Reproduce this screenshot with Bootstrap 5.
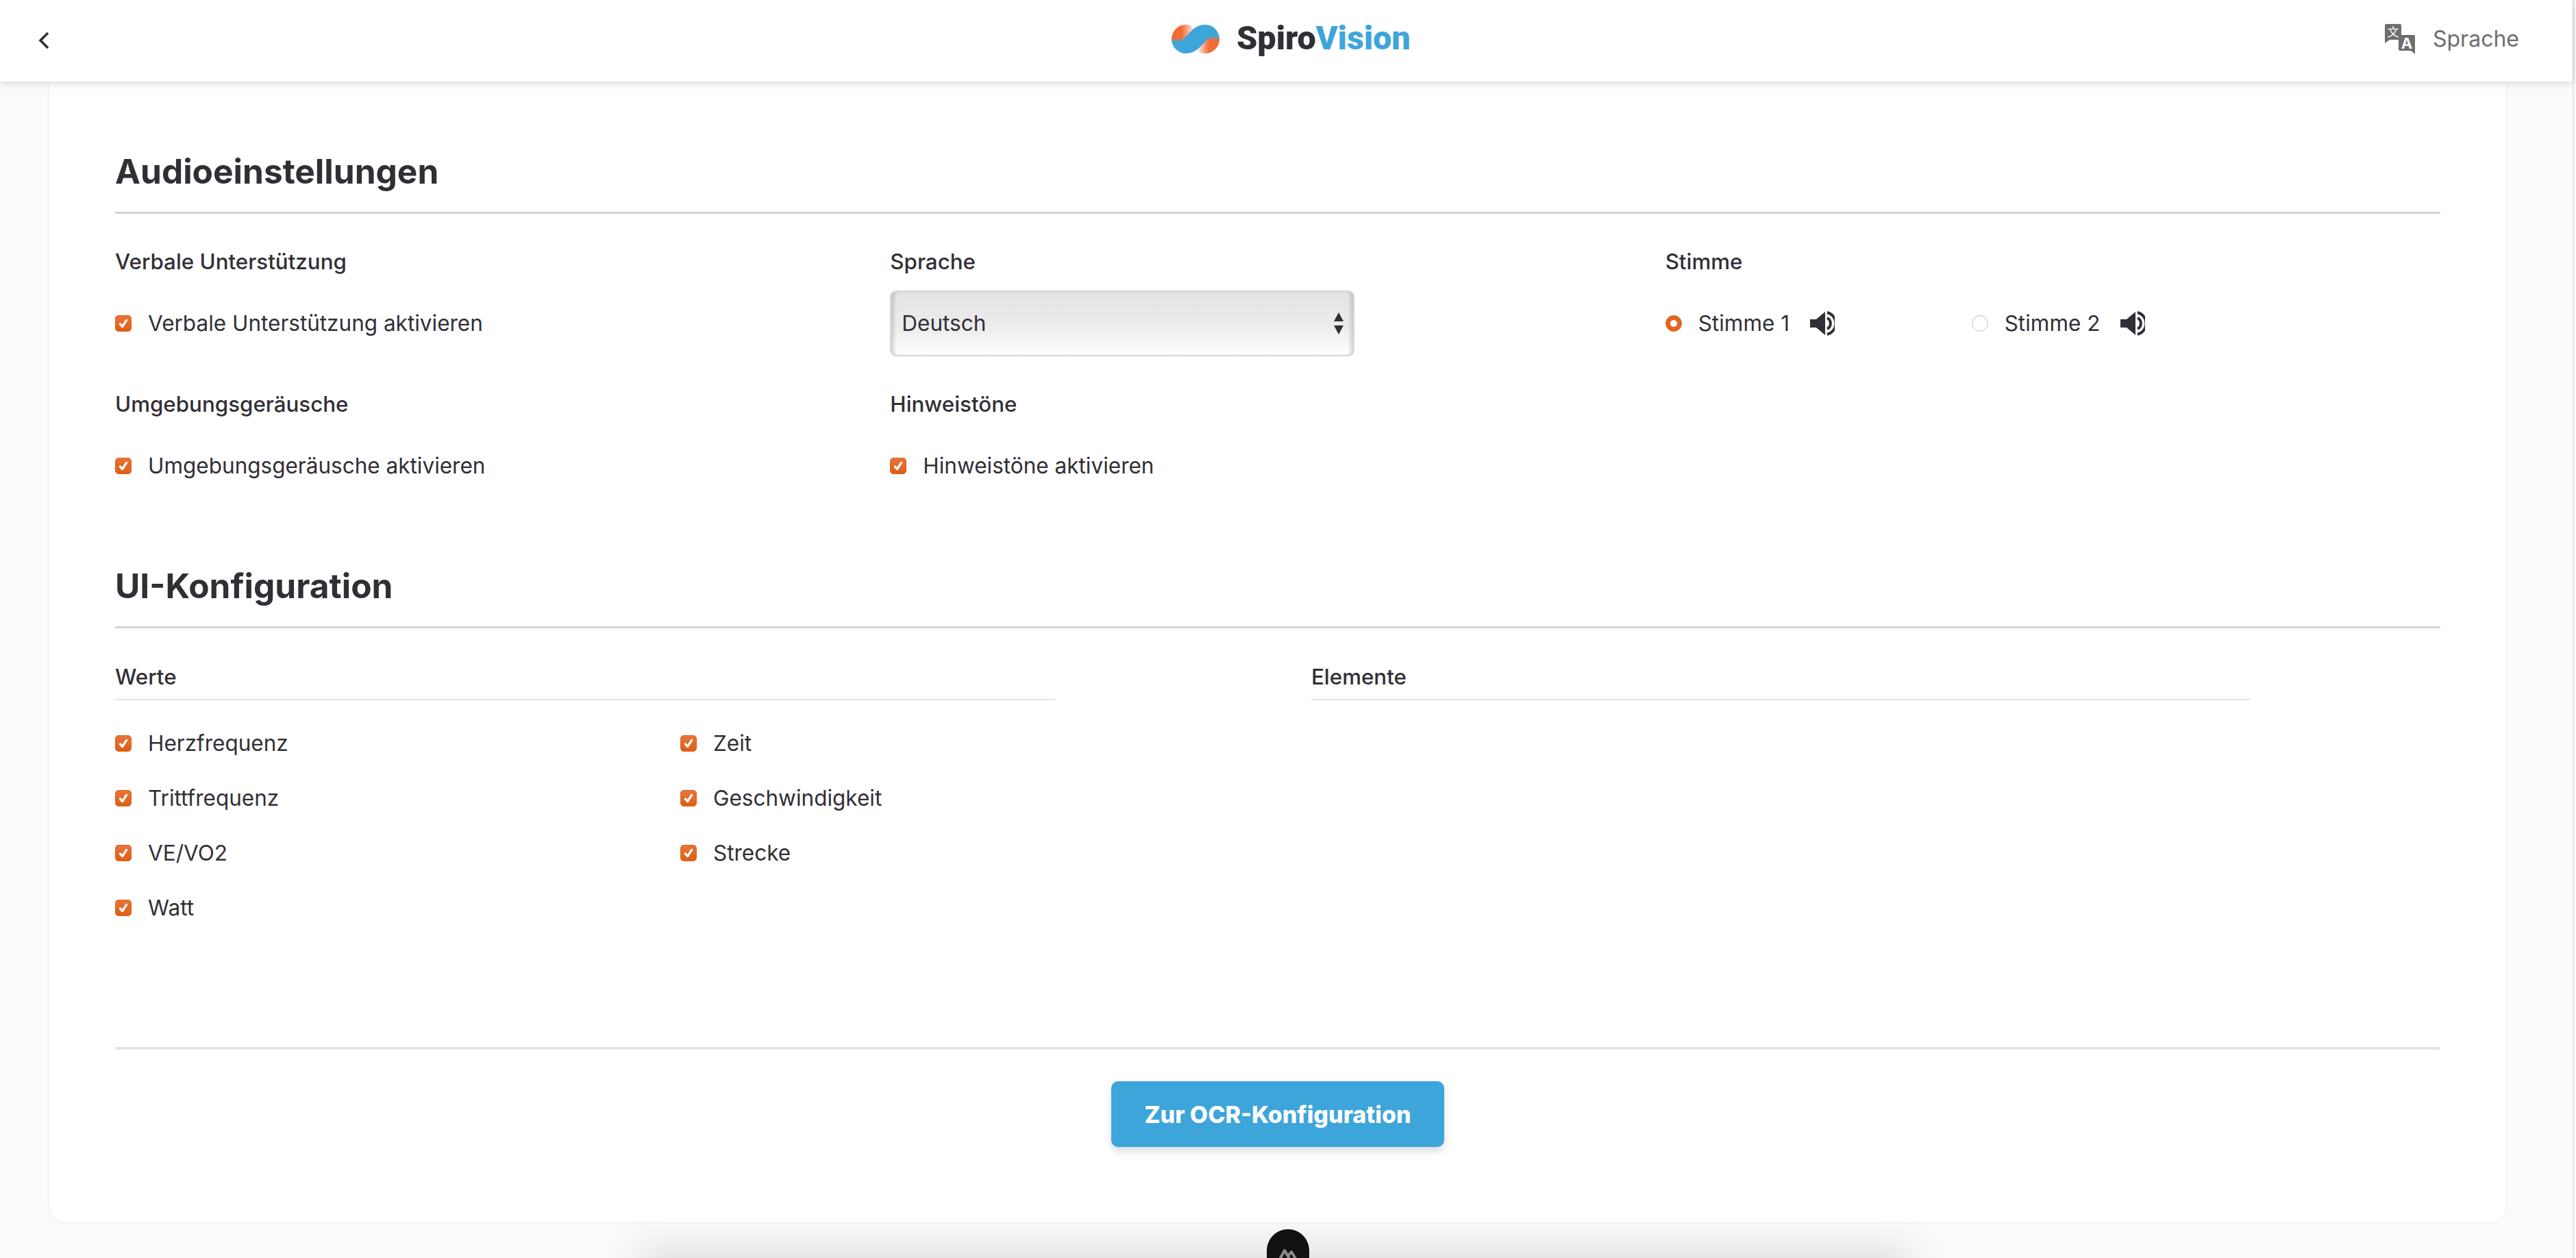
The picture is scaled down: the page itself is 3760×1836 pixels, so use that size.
<!DOCTYPE html>
<html lang="de">
<head>
    <meta charset="utf-8">
    <title>SpiroVision</title>
    <link href="https://cdn.jsdelivr.net/npm/bootstrap@5.3.0/dist/css/bootstrap.min.css" rel="stylesheet">
    <style>
        html, body { height: 100%; }
        body { background: #fbfbfb; color: #312f36; font-family: "Inter", "Liberation Sans", sans-serif; font-size: 31.5px; overflow: hidden; }
        .app-shell { height: 1836px; margin-right: 3px; border-right: 2px solid #e4e4e4; }
        .top-bar { height: 119px; background: #fff; box-shadow: 0 2px 12px rgba(0,0,0,.16); position: relative; z-index: 5; padding: 0 78px 6px 55px; }
        .top-bar .side-l { width: 336px; }
        .top-bar .side-r { width: 300px; }
        .brand { font-family: "Roboto", "Liberation Sans", sans-serif; font-weight: 900; font-size: 48.5px; line-height: 1; color: #312f36; gap: 24px; }
        .brand span { color: #3ea5db; }
        .lang-link { color: #6e6e6e; font-size: 32px; gap: 26px; }
        .lang-icon { overflow: visible; }
        .panel { width: 3586px; margin-left: 72px; background: #fff; border-radius: 0 0 24px 24px; box-shadow: 0 0 4px rgba(0,0,0,.08); height: 1665px; padding: 101px 96px 0; }
        .section-title { font-size: 49.6px; font-weight: 700; line-height: 60px; margin: 0; padding-bottom: 29px; border-bottom: 3px solid #d5d5d5; }
        .field-label { font-size: 31.3px; font-weight: 500; line-height: 48px; margin: 0 0 18px; }
        .ctl-row { height: 96px; }
        .settings-row { margin-top: 46px; }
        .form-check { min-height: 0; padding: 0; margin: 0; display: flex; align-items: center; gap: 24px; }
        .form-check .form-check-input { float: none; margin: 0; width: 24px; height: 24px; flex: none; border: 1px solid #c8c8c8; box-shadow: inset 0 1px 2px rgba(0,0,0,.08); }
        .form-check .form-check-input:checked { background-color: #e2661f; border-color: #df651f; box-shadow: none; }
        .form-check .form-check-input[type=checkbox] { border-radius: 5px; }
        .form-check .form-check-input:checked[type=checkbox] { background-image: url("data:image/svg+xml,%3csvg xmlns='http://www.w3.org/2000/svg' viewBox='0 0 24 24'%3e%3cpath fill='none' stroke='%23fff' stroke-linecap='round' stroke-linejoin='round' stroke-width='3.6' d='M7 13l3.500 4L17 7'/%3e%3c/svg%3e"), linear-gradient(#e8743a, #dc5f16); }
        .form-check .form-check-input:checked[type=radio] { background-image: radial-gradient(circle, #fff 4.5px, transparent 5.5px); }
        .form-check-label { font-size: 31.5px; line-height: 40px; }
        .voice-pick { width: 447px; gap: 30px; }
        .speaker { width: 36px; height: 36px; flex: none; }
        .lang-select { width: 678px; height: 96px; padding: 0 14px 0 15px; border: 2px solid #d3d5d7; border-radius: 9px; font-size: 31.5px; color: #312f36; background: linear-gradient(#e4e4e4, #ebebeb 50%, #f1f1f1 68%, #fff); box-shadow: inset 7px 0 5px -3px rgba(0,0,0,.14), inset -7px 0 5px -3px rgba(0,0,0,.14); }
        .ui-title { margin-top: 97px; }
        .ui-cols { width: 100%; gap: 374px; margin-top: 47px; }
        .ui-col { width: 1372px; }
        .ui-col-head { font-size: 31.3px; font-weight: 500; line-height: 48px; padding-bottom: 8px; border-bottom: 2px solid #e4e4e8; }
        .value-grid { display: grid; grid-template-columns: 825px 1fr; grid-auto-rows: 80px; margin-top: 23px; align-items: center; }
        .foot-rule { height: 4px; background: #e5e5ea; margin-top: 163px; }
        .btn-next { display: block; width: 486px; height: 96px; margin: 46px 0 0 1454px; padding: 0; background: #3ea5db; border: 0; border-radius: 10px; color: #fff; font-size: 34px; font-weight: 800; box-shadow: 0 6px 12px rgba(0,0,0,.14); }
        .btn-next:hover { background: #3ea5db; color: #fff; }
        .dock { position: fixed; left: 960px; bottom: -40px; width: 1800px; height: 24px; background: #ccc; box-shadow: 0 0 60px 30px rgba(0,0,0,.12); }
        .dock-pill { position: fixed; left: 1849px; top: 1794px; width: 62px; height: 80px; background: #111; border-radius: 31px; text-align: center; padding-top: 17px; }
    </style>
</head>
<body>
    <div class="app-shell">
        <nav class="top-bar d-flex align-items-center justify-content-between">
            <div class="side-l">
                <svg width="18" height="26" viewBox="0 0 18 26"><path d="M15 2 4 13l11 11" fill="none" stroke="#312f36" stroke-width="3.6"/></svg>
            </div>
            <div class="brand d-flex align-items-center">
                <svg width="72" height="42" viewBox="0 0 70 42">
                    <defs>
                        <linearGradient id="orangeL" x1="0" x2="1" y1="0" y2="0"><stop offset=".45" stop-color="#f26a35"/><stop offset="1" stop-color="#fdf3ee"/></linearGradient>
                        <linearGradient id="orangeR" x1="1" x2="0" y1="0" y2="0"><stop offset=".45" stop-color="#f26a35"/><stop offset="1" stop-color="#fdf3ee"/></linearGradient>
                        <linearGradient id="fadeL" x1="0" x2="0" y1="0" y2="1"><stop offset="0" stop-color="#a98a80"/><stop offset="1" stop-color="#3ea5db" stop-opacity="0"/></linearGradient>
                        <linearGradient id="fadeR" x1="0" x2="0" y1="1" y2="0"><stop offset="0" stop-color="#a98a80"/><stop offset="1" stop-color="#3ea5db" stop-opacity="0"/></linearGradient>
                    </defs>
                    <path d="M0 21A21 21 0 0 1 21 0c5 0 9 2 12 5L17 22Z" fill="url(#orangeL)"/>
                    <path d="M70 21A21 21 0 0 1 49 42c-5 0-9-2-12-5L53 20Z" fill="url(#orangeR)"/>
                    <path d="M0 21H17L30 8C35 3 42 0 49 0A21 21 0 0 1 70 21H53L40 34C35 39 28 42 21 42A21 21 0 0 1 0 21Z" fill="#3ea5db"/>
                    <path d="M0 21H17L10 29H3Q1 25 0 21Z" fill="url(#fadeL)"/>
                    <path d="M70 21H53L60 13H67Q69 17 70 21Z" fill="url(#fadeR)"/>
                </svg>
                <div>Spiro<span>Vision</span></div>
            </div>
            <div class="side-r d-flex justify-content-end">
                <div class="lang-link d-flex align-items-center">
                    <svg class="lang-icon" width="44" height="44" viewBox="0 0 44 44">
                        <path d="M2 0H22a2 2 0 0 1 2 2V21a2 2 0 0 1-2 2H7L0 28V2a2 2 0 0 1 2-2Z" fill="#6e6e6e"/>
                        <text x="12" y="18" text-anchor="middle" font-size="17" font-family="Noto Sans CJK SC, sans-serif" fill="#fff">文</text>
                        <path d="M22 16H42a2 2 0 0 1 2 2V44l-6-5H22a2 2 0 0 1-2-2V18a2 2 0 0 1 2-2Z" fill="#6e6e6e"/>
                        <text x="32" y="36" text-anchor="middle" font-size="22" font-weight="700" font-family="Inter, sans-serif" fill="#fff">A</text>
                    </svg>
                    <span>Sprache</span>
                </div>
            </div>
        </nav>

        <main class="panel">
            <h2 class="section-title">Audioeinstellungen</h2>

            <div class="row g-0 settings-row">
                <div class="col-4">
                    <p class="field-label">Verbale Unterstützung</p>
                    <div class="ctl-row d-flex align-items-center">
                        <div class="form-check">
                            <input class="form-check-input" type="checkbox" id="verbal" checked>
                            <label class="form-check-label" for="verbal">Verbale Unterstützung aktivieren</label>
                        </div>
                    </div>
                </div>
                <div class="col-4">
                    <p class="field-label">Sprache</p>
                    <div class="ctl-row">
                        <div class="lang-select d-flex align-items-center justify-content-between">
                            <span>Deutsch</span>
                            <svg width="14" height="32" viewBox="0 0 14 32"><path d="M7 0 14 13H0ZM7 32 0 19H14Z" fill="#312f36"/></svg>
                        </div>
                    </div>
                </div>
                <div class="col-4">
                    <p class="field-label">Stimme</p>
                    <div class="ctl-row d-flex align-items-center">
                        <div class="voice-pick d-flex align-items-center">
                            <div class="form-check">
                                <input class="form-check-input" type="radio" name="voice" id="voice1" checked>
                                <label class="form-check-label" for="voice1">Stimme 1</label>
                            </div>
                            <svg class="speaker" viewBox="0 0 36 36"><path d="M0 12H9L22 1V35L9 24H0Z" fill="#312f36"/><path d="M25 10A9 9 0 0 1 25 26M25 2A16.500 16.500 0 0 1 25 34" fill="none" stroke="#312f36" stroke-width="4"/></svg>
                        </div>
                        <div class="voice-pick d-flex align-items-center">
                            <div class="form-check">
                                <input class="form-check-input" type="radio" name="voice" id="voice2">
                                <label class="form-check-label" for="voice2">Stimme 2</label>
                            </div>
                            <svg class="speaker" viewBox="0 0 36 36"><path d="M0 12H9L22 1V35L9 24H0Z" fill="#312f36"/><path d="M25 10A9 9 0 0 1 25 26M25 2A16.500 16.500 0 0 1 25 34" fill="none" stroke="#312f36" stroke-width="4"/></svg>
                        </div>
                    </div>
                </div>
            </div>

            <div class="row g-0 settings-row">
                <div class="col-4">
                    <p class="field-label">Umgebungsgeräusche</p>
                    <div class="ctl-row d-flex align-items-center">
                        <div class="form-check">
                            <input class="form-check-input" type="checkbox" id="ambient" checked>
                            <label class="form-check-label" for="ambient">Umgebungsgeräusche aktivieren</label>
                        </div>
                    </div>
                </div>
                <div class="col-4">
                    <p class="field-label">Hinweistöne</p>
                    <div class="ctl-row d-flex align-items-center">
                        <div class="form-check">
                            <input class="form-check-input" type="checkbox" id="hints" checked>
                            <label class="form-check-label" for="hints">Hinweistöne aktivieren</label>
                        </div>
                    </div>
                </div>
            </div>

            <h2 class="section-title ui-title">UI-Konfiguration</h2>

            <div class="ui-cols d-flex">
                <div class="ui-col">
                    <div class="ui-col-head">Werte</div>
                    <div class="value-grid">
                        <div class="form-check"><input class="form-check-input" type="checkbox" id="v1" checked><label class="form-check-label" for="v1">Herzfrequenz</label></div>
                        <div class="form-check"><input class="form-check-input" type="checkbox" id="v2" checked><label class="form-check-label" for="v2">Zeit</label></div>
                        <div class="form-check"><input class="form-check-input" type="checkbox" id="v3" checked><label class="form-check-label" for="v3">Trittfrequenz</label></div>
                        <div class="form-check"><input class="form-check-input" type="checkbox" id="v4" checked><label class="form-check-label" for="v4">Geschwindigkeit</label></div>
                        <div class="form-check"><input class="form-check-input" type="checkbox" id="v5" checked><label class="form-check-label" for="v5">VE/VO2</label></div>
                        <div class="form-check"><input class="form-check-input" type="checkbox" id="v6" checked><label class="form-check-label" for="v6">Strecke</label></div>
                        <div class="form-check"><input class="form-check-input" type="checkbox" id="v7" checked><label class="form-check-label" for="v7">Watt</label></div>
                    </div>
                </div>
                <div class="ui-col">
                    <div class="ui-col-head">Elemente</div>
                </div>
            </div>

            <div class="foot-rule"></div>
            <button type="button" class="btn btn-next">Zur OCR-Konfiguration</button>
        </main>
    </div>

    <div class="dock"></div>
    <div class="dock-pill">
        <svg width="40" height="30" viewBox="0 0 40 30"><path d="M4 23 15 3 27 23ZM20 11 25 5 36 23H27" fill="none" stroke="#8a8a8a" stroke-width="4" stroke-linejoin="round"/></svg>
    </div>

    <script src="https://cdn.jsdelivr.net/npm/bootstrap@5.3.0/dist/js/bootstrap.bundle.min.js"></script>
</body>
</html>
